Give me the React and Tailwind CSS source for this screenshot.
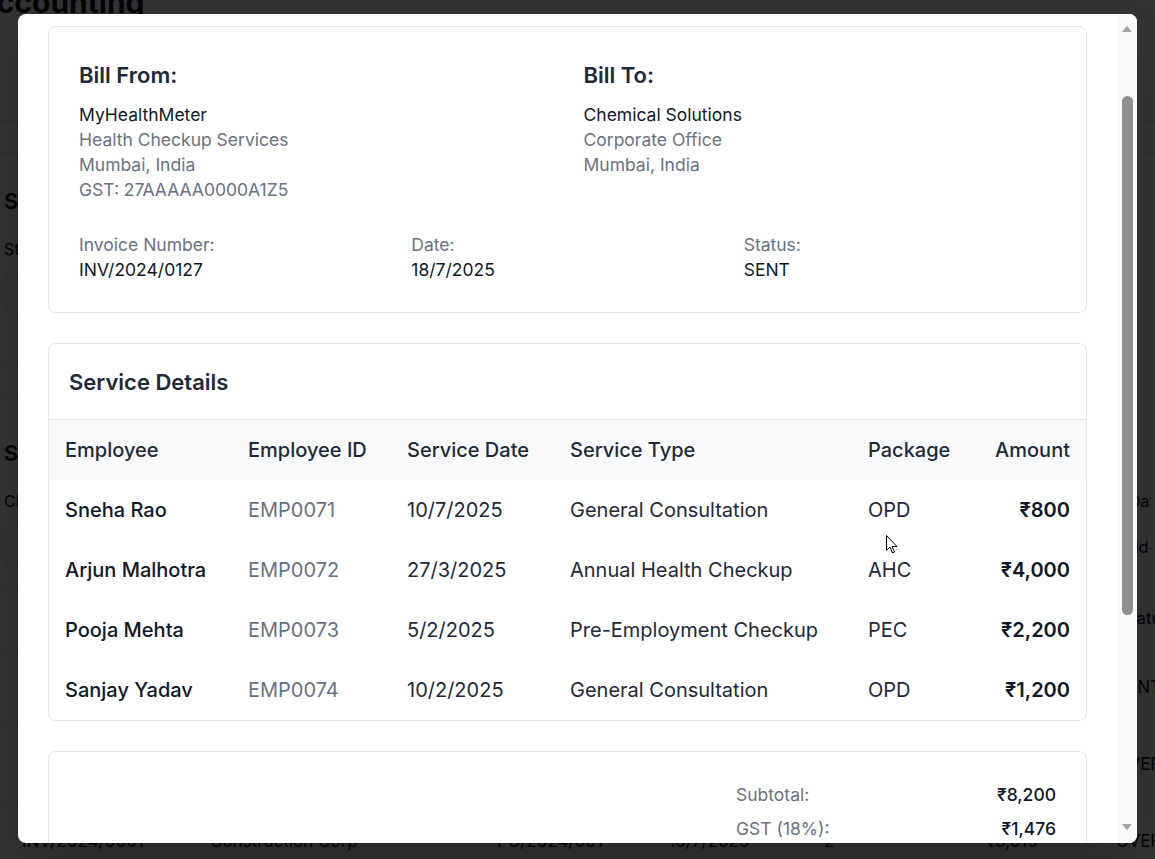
import React from 'react';

const rows = [
  { name: 'Sneha Rao', id: 'EMP0071', date: '10/7/2025', type: 'General Consultation', pkg: 'OPD', amount: '₹800' },
  { name: 'Arjun Malhotra', id: 'EMP0072', date: '27/3/2025', type: 'Annual Health Checkup', pkg: 'AHC', amount: '₹4,000' },
  { name: 'Pooja Mehta', id: 'EMP0073', date: '5/2/2025', type: 'Pre-Employment Checkup', pkg: 'PEC', amount: '₹2,200' },
  { name: 'Sanjay Yadav', id: 'EMP0074', date: '10/2/2025', type: 'General Consultation', pkg: 'OPD', amount: '₹1,200' },
];

const bgRows = [
  { inv: 'INV/2024/0127', client: 'Chemical Solutions', po: 'PO/2024/127', date: '18/7/2025', count: '4', amount: '₹9,676', status: 'SENT' },
  { inv: 'INV/2024/0003', client: 'Pharma Industries', po: 'PO/2024/003', date: '12/7/2025', count: '3', amount: '₹7,080', status: 'OVERDUE' },
  { inv: 'INV/2024/0001', client: 'Construction Corp', po: 'PO/2024/001', date: '10/7/2025', count: '2', amount: '₹5,015', status: 'OVERDUE' },
];

// page behind the dialog, only its edges show
function BackgroundPage() {
  return (
    <div className="w-[1155px] h-[859px] bg-white text-gray-900 overflow-hidden">
      <h1 className="-mt-[16px] -ml-[25px] text-[30px] font-bold leading-[36px]">Accounting</h1>
      <div className="mt-[41px] border-b border-gray-200 h-[1px]" />
      <div className="mt-[58px] border-b border-gray-200 h-[1px]" />
      <div className="mt-[31px] border-b border-gray-200 h-[1px]" />
      <div className="px-[4px] pt-[34px]">
        <h2 className="text-[22px] font-semibold leading-[28px]">Service Filters</h2>
        <p className="mt-[22px] text-[16px] leading-[24px]">Status</p>
        <div className="mt-[12px] h-[40px] w-[300px] rounded-md border border-gray-200" />
      </div>
      <div className="mt-[50px] border-b border-gray-200 h-[1px]" />
      <div className="mt-[30px] border-b border-gray-200 h-[1px]" />
      <div className="px-[4px] pt-[44px]">
        <h2 className="text-[22px] font-semibold leading-[28px]">Search Invoices</h2>
        <div className="mt-[22px] flex justify-between">
          <p className="text-[16px] leading-[24px]">Client</p>
          <p className="text-[16px] leading-[24px] w-[22px] overflow-hidden whitespace-nowrap">Date</p>
        </div>
        <div className="mt-[13px] flex justify-between">
          <div className="h-[42px] w-[300px] rounded-md border border-gray-200" />
          <div className="h-[42px] w-[22px] text-[16px] leading-[42px] whitespace-nowrap overflow-hidden">dd-mm</div>
        </div>
      </div>
      <div className="mt-[17px] border-b border-gray-200 h-[1px]" />
      <div className="flex h-[64px] items-center justify-end border-b border-gray-200 text-[16px] font-medium">
        <span className="w-[34px] whitespace-nowrap overflow-hidden text-right">Status</span>
      </div>
      {bgRows.map((r) => (
        <div key={r.inv} className="flex h-[77px] items-center border-b border-gray-200 text-[17px] whitespace-nowrap">
          <span className="w-[210px] pl-[22px]">{r.inv}</span>
          <span className="w-[287px]">{r.client}</span>
          <span className="w-[171px]">{r.po}</span>
          <span className="w-[156px]">{r.date}</span>
          <span className="w-[162px]">{r.count}</span>
          <span className="w-[130px]">{r.amount}</span>
          <span className="w-[39px] overflow-hidden">{r.status}</span>
        </div>
      ))}
    </div>
  );
}

function Scrollbar() {
  return (
    <div className="w-[20px] bg-[#f9f9f9] flex flex-col items-center">
      <div className="h-[28px] flex items-center justify-center pt-[2px]">
        <div className="w-0 h-0 border-l-[5px] border-r-[5px] border-b-[6px] border-l-transparent border-r-transparent border-b-[#a3a3a3]" />
      </div>
      <div className="mt-[54px] h-[519px] w-[11px] rounded-full bg-[#8f8f8f]" />
      <div className="flex-1" />
      <div className="h-[30px] flex items-center justify-center pb-[2px]">
        <div className="w-0 h-0 border-l-[5px] border-r-[5px] border-t-[6px] border-l-transparent border-r-transparent border-t-[#a3a3a3]" />
      </div>
    </div>
  );
}

function Party({ title, name, lines }) {
  return (
    <div>
      <h3 className="text-[22px] font-semibold leading-[28px] text-gray-800">{title}</h3>
      <div className="mt-[13px] text-[17.5px] leading-[25px]">
        <p className="text-gray-900">{name}</p>
        {lines.map((l) => (
          <p key={l} className="text-gray-500">{l}</p>
        ))}
      </div>
    </div>
  );
}

function Meta({ label, value }) {
  return (
    <div className="text-[17.5px] leading-[25px]">
      <p className="text-gray-500">{label}</p>
      <p className="text-gray-900">{value}</p>
    </div>
  );
}

function InvoiceModal() {
  return (
    <div className="absolute left-[18px] top-[14px] w-[1119px] h-[829px] bg-white rounded-lg shadow-2xl overflow-hidden flex">
      <div className="flex-1 overflow-hidden px-[30px] pt-[12px] flex flex-col gap-[30px]">
        <section className="shrink-0 rounded-lg border border-gray-200 px-[30px] pt-[34px] pb-[30px]">
          <div className="grid grid-cols-2 gap-8">
            <Party title="Bill From:" name="MyHealthMeter" lines={['Health Checkup Services', 'Mumbai, India', 'GST: 27AAAAA0000A1Z5']} />
            <Party title="Bill To:" name="Chemical Solutions" lines={['Corporate Office', 'Mumbai, India']} />
          </div>
          <div className="mt-[30px] grid grid-cols-3 gap-5">
            <Meta label="Invoice Number:" value="INV/2024/0127" />
            <Meta label="Date:" value="18/7/2025" />
            <Meta label="Status:" value="SENT" />
          </div>
        </section>

        <section className="shrink-0 rounded-lg border border-gray-200 overflow-hidden">
          <div className="px-5 pt-6 pb-[23px] border-b border-gray-200">
            <h3 className="text-[22px] font-semibold leading-[28px] text-gray-800">Service Details</h3>
          </div>
          <table className="w-full table-fixed text-[20px]">
            <colgroup>
              <col className="w-[183px]" />
              <col className="w-[159px]" />
              <col className="w-[163px]" />
              <col className="w-[298px]" />
              <col className="w-[123px]" />
              <col />
            </colgroup>
            <thead className="bg-gray-50">
              <tr className="h-[60px] text-left text-gray-800">
                <th className="px-4 font-medium">Employee</th>
                <th className="px-4 font-medium">Employee ID</th>
                <th className="px-4 font-medium">Service Date</th>
                <th className="px-4 font-medium">Service Type</th>
                <th className="px-4 font-medium">Package</th>
                <th className="px-4 font-medium text-right">Amount</th>
              </tr>
            </thead>
            <tbody>
              {rows.map((r) => (
                <tr key={r.id} className="h-[60px] text-gray-800">
                  <td className="px-4 font-medium text-gray-900 whitespace-nowrap">{r.name}</td>
                  <td className="px-4 text-gray-500">{r.id}</td>
                  <td className="px-4">{r.date}</td>
                  <td className="px-4 whitespace-nowrap">{r.type}</td>
                  <td className="px-4">{r.pkg}</td>
                  <td className="px-4 text-right font-semibold text-gray-900">{r.amount}</td>
                </tr>
              ))}
            </tbody>
          </table>
        </section>

        <section className="shrink-0 rounded-lg border border-gray-200 pt-[30px] pr-[30px] h-[200px] flex justify-end">
          <div className="w-[320px] flex flex-col gap-[9px] text-[17.5px] leading-[25px]">
            <div className="flex justify-between">
              <span className="text-gray-500">Subtotal:</span>
              <span className="font-medium text-gray-900">₹8,200</span>
            </div>
            <div className="flex justify-between">
              <span className="text-gray-500">GST (18%):</span>
              <span className="font-medium text-gray-900">₹1,476</span>
            </div>
          </div>
        </section>
      </div>
      <Scrollbar />
    </div>
  );
}

export default function App() {
  return (
    <div className="relative w-[1155px] h-[859px] overflow-hidden font-['Inter',sans-serif]">
      <BackgroundPage />
      <div className="absolute inset-0 bg-black/80" />
      <InvoiceModal />
      <svg className="absolute left-[886px] top-[535px]" width="12" height="19" viewBox="0 0 12 19">
        <path d="M0.5 0.5 L0.5 15.5 L4 12 L6.5 18 L8.5 17 L6 11.5 L11 11.5 Z" fill="white" stroke="black" strokeWidth="1" />
      </svg>
    </div>
  );
}
